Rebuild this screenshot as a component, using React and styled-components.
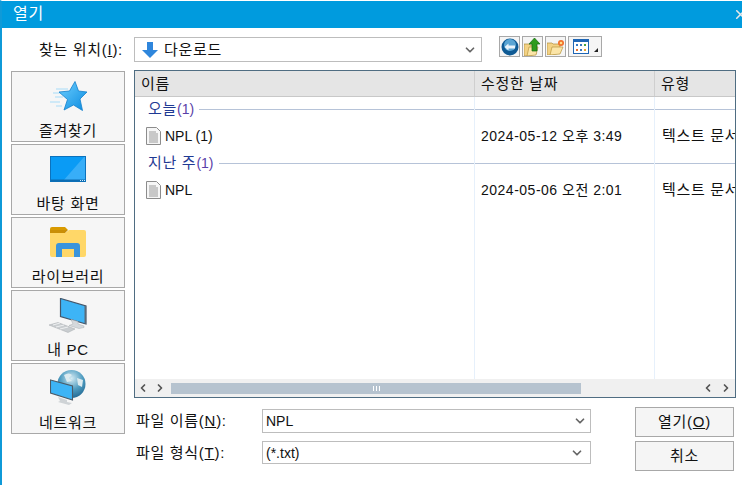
import React from "react";
import styled, { createGlobalStyle } from "styled-components";
import { ChevronDown, ChevronLeft, ChevronRight, X } from "lucide-react";

const GlobalStyle = createGlobalStyle`
  html, body { margin: 0; padding: 0; background: #fff; }
  * { box-sizing: border-box; }
  body {
    font-family: "Liberation Sans", "Noto Sans CJK KR", sans-serif;
    font-size: 15px;
    line-height: 20px;
    letter-spacing: 0.7px;
    color: #111;
  }
`;

const places = [
  { label: "즐겨찾기", icon: <StarIcon /> },
  { label: "바탕 화면", icon: <DesktopIcon /> },
  { label: "라이브러리", icon: <LibraryIcon /> },
  { label: "내 PC", icon: <PcIcon /> },
  { label: "네트워크", icon: <NetworkIcon /> },
];

const groups = [
  { title: "오늘", count: "(1)", name: "NPL (1)", date: "2024-05-12 오후 3:49" },
  { title: "지난 주", count: "(1)", name: "NPL", date: "2024-05-06 오전 2:01" },
];

function StarIcon() {
  return (
    <svg width="38" height="30" viewBox="0 0 38 30">
      <defs>
        <linearGradient id="star" x1="0" y1="0" x2="1" y2="1">
          <stop offset="0" stopColor="#6fd0ff" />
          <stop offset="1" stopColor="#0a8be0" />
        </linearGradient>
      </defs>
      <path d="M7 8h12M4 12h10M6 16h8M1 21h10M7 25h6" stroke="#a8dcf8" strokeWidth="1.2" />
      <path d="M26 .5l3.500 9.500L38 11l-7 7 2.500 11.500-9-5.500-9.500 5 3.500-10.500L10 11l10.500-1z" fill="url(#star)" stroke="#1480cc" strokeWidth="0.8" />
    </svg>
  );
}

function DesktopIcon() {
  return (
    <svg width="36" height="26" viewBox="0 0 36 26">
      <rect x="0.500" y="0.500" width="35" height="25" fill="#0a9bf5" stroke="#0c72bd" />
      <path d="M13 25L34 1h1v24z" fill="#38aef8" />
      <rect x="1" y="23.500" width="34" height="2" fill="#0c6cb2" />
      <path d="M30 24.500h5" stroke="#d8eefc" strokeDasharray="1 1" />
    </svg>
  );
}

function LibraryIcon() {
  return (
    <svg width="36" height="30" viewBox="0 0 36 30">
      <path d="M0 2q0-2 2-2h13l3 3h-18z" fill="#d99a00" />
      <path d="M0 6h15l4-3h15q2 0 2 2v23q0 2-2 2H2q-2 0-2-2z" fill="#ffd768" />
      <path d="M0 3h18l-3 3H0z" fill="#c98e06" />
      <path d="M6 30V19q0-3 3-3h18q3 0 3 3v11h-6v-8H12v8z" fill="#3a94dc" />
    </svg>
  );
}

function PcIcon() {
  return (
    <svg width="38" height="35" viewBox="0 0 38 35">
      <path d="M11.500 .5l25.500 7.500v18L11.500 18.500z" fill="#3db4f6" stroke="#44566a" strokeWidth="1.2" />
      <path d="M37 8v18l-1.500-.5V8z" fill="#5a6b78" />
      <path d="M22 21.500l7 2v2.500l6 2v1.500l-5 1-10-3 4-1.500z" fill="#d5d9dc" stroke="#aab0b5" strokeWidth="0.5" />
      <path d="M0 27l9-2.500 17 6.500-7 3.500z" fill="#c9cdd0" stroke="#a4a8ac" strokeWidth="0.5" />
      <path d="M4 27l7-2M7 29l8-2M11 31l8-2" stroke="#eef0f1" />
    </svg>
  );
}

function NetworkIcon() {
  return (
    <svg width="36" height="36" viewBox="0 0 36 36">
      <defs>
        <radialGradient id="globe" cx="0.500" cy="0.300" r="0.800">
          <stop offset="0" stopColor="#d3eaf3" />
          <stop offset="0.500" stopColor="#4f9cc0" />
          <stop offset="1" stopColor="#165a86" />
        </radialGradient>
      </defs>
      <circle cx="21.500" cy="14" r="14" fill="url(#globe)" />
      <path d="M14 5q5-3 8 0l-3 3 3 3-5 1zM27 8l6 2-1 7-4-2z" fill="#dcebf0" />
      <path d="M0.500 10l22 6v14l-22-7z" fill="#3db4f6" stroke="#4b5b68" strokeWidth="1.1" />
      <path d="M8 27l9 3v2l5 1-3 2-11-3 2-1z" fill="#cfd3d6" />
    </svg>
  );
}

function ArrowDownIcon() {
  return (
    <svg width="16" height="16" viewBox="0 0 16 16">
      <path d="M5 0h6v8h5l-8 8-8-8h5z" fill="#2f86dc" />
    </svg>
  );
}

function BackIcon() {
  return (
    <svg width="18" height="18" viewBox="0 0 18 18">
      <circle cx="9" cy="9" r="8.500" fill="#0f5a94" />
      <circle cx="9" cy="7" r="6" fill="#5aa5d4" />
      <path d="M3.500 9l4-3.500v2H14v3H7.500v2z" fill="#eaf4fb" />
    </svg>
  );
}

function UpIcon() {
  return (
    <svg width="17" height="18" viewBox="0 0 17 18">
      <path d="M0 6h5l1 1h6v9l-9 2H0z" fill="#f3d284" stroke="#b08d3c" strokeWidth="0.7" />
      <path d="M3 18l2-9h9l-2 8z" fill="#fbe5a8" stroke="#b8963f" strokeWidth="0.7" />
      <path d="M10.500 0L16 6h-3v7H8V6H5z" fill="#2e9b1d" stroke="#186b10" strokeWidth="0.7" />
    </svg>
  );
}

function NewFolderIcon() {
  return (
    <svg width="18" height="16" viewBox="0 0 18 16">
      <path d="M0 4h5l1 1h7v9l-9 2H0z" fill="#f3d284" stroke="#b08d3c" strokeWidth="0.7" />
      <path d="M3 16l2-8h11l-3 7z" fill="#fbe5a8" stroke="#b8963f" strokeWidth="0.7" />
      <circle cx="14" cy="4" r="3" fill="#f2702a" />
      <circle cx="14" cy="4" r="1.300" fill="#ffe08a" />
    </svg>
  );
}

function ViewIcon() {
  return (
    <svg width="16" height="15" viewBox="0 0 16 15">
      <rect x="0.500" y="0.500" width="15" height="14" fill="#fff" stroke="#1f66b5" />
      <rect x="1" y="1" width="14" height="2" fill="#1f66b5" />
      <path d="M3 5h2v2H3z" fill="#3778c0" />
      <path d="M7 5h2v2H7z" fill="#3778c0" />
      <path d="M11 5h2v2h-2z" fill="#49a63c" />
      <path d="M3 10h2v2H3z" fill="#e8702a" />
      <path d="M7 10h2v2H7z" fill="#3778c0" />
      <path d="M11 10h2v2h-2z" fill="#e8a52a" />
    </svg>
  );
}

function FileIcon() {
  return (
    <svg width="15" height="18" viewBox="0 0 15 18">
      <path d="M.5.500h10l4 4v13H.5z" fill="#f6f6f6" stroke="#8c8c8c" />
      <path d="M3 5h7M3 7h9M3 9h9M3 11h9M3 13h9M3 15h9" stroke="#9a9a9a" />
    </svg>
  );
}

export default function App() {
  return (
    <Window>
      <GlobalStyle />
      <TitleBar>
        <span>열기</span>
        <CloseMark><X size={15} strokeWidth={2.5} /></CloseMark>
      </TitleBar>
      <Content>
        <LookInRow>
          <LookInLabel>찾는 위치(<u>I</u>):</LookInLabel>
          <LookInCombo>
            <ArrowDownIcon />
            <span>다운로드</span>
            <Chevron><ChevronDown size={14} strokeWidth={3} /></Chevron>
          </LookInCombo>
          <Toolbar>
            <ToolButton><BackIcon /></ToolButton>
            <ToolButton><UpIcon /></ToolButton>
            <ToolButton><NewFolderIcon /></ToolButton>
            <ViewButton><ViewIcon /><ViewCaret /></ViewButton>
          </Toolbar>
        </LookInRow>
        <MainRow>
          <PlacesBar>
            {places.map((p) => (
              <PlaceButton key={p.label}>
                <PlaceIcon>{p.icon}</PlaceIcon>
                <PlaceLabel>{p.label}</PlaceLabel>
              </PlaceButton>
            ))}
          </PlacesBar>
          <RightColumn>
            <FileList>
              <ListHeader>
                <HeadCell $w={340}>이름</HeadCell>
                <HeadCell $w={180}>수정한 날짜</HeadCell>
                <HeadCell $w={80} $last>유형</HeadCell>
              </ListHeader>
              <ListBody>
                <ColumnLines>
                  <ColumnLine $w={340} />
                  <ColumnLine $w={180} />
                </ColumnLines>
                {groups.map((g) => (
                  <div key={g.title}>
                    <GroupRow>
                      <GroupTitle>{g.title}<GroupCount>{g.count}</GroupCount></GroupTitle>
                      <GroupLine />
                    </GroupRow>
                    <FileRow>
                      <NameCell><FileIcon /><span>{g.name}</span></NameCell>
                      <DateCell>{g.date}</DateCell>
                      <TypeCell>텍스트 문서</TypeCell>
                    </FileRow>
                  </div>
                ))}
              </ListBody>
              <ScrollBar>
                <ScrollArrows $left>
                  <ChevronLeft size={12} strokeWidth={3.5} />
                  <ChevronRight size={12} strokeWidth={3.5} />
                </ScrollArrows>
                <ScrollTrack>
                  <ScrollThumb><Grip /></ScrollThumb>
                </ScrollTrack>
                <ScrollArrows>
                  <ChevronLeft size={12} strokeWidth={3.5} />
                  <ChevronRight size={12} strokeWidth={3.5} />
                </ScrollArrows>
              </ScrollBar>
            </FileList>
            <FormArea>
              <FormFields>
                <FormLabel>파일 이름(<u>N</u>):</FormLabel>
                <FieldBox>NPL<Chevron><ChevronDown size={14} strokeWidth={3} /></Chevron></FieldBox>
                <FormLabel>파일 형식(<u>T</u>):</FormLabel>
                <FieldBox $short>(*.txt)<Chevron $inset><ChevronDown size={14} strokeWidth={3} /></Chevron></FieldBox>
              </FormFields>
              <Actions>
                <ActionButton>열기(<u>O</u>)</ActionButton>
                <ActionButton>취소</ActionButton>
              </Actions>
            </FormArea>
          </RightColumn>
        </MainRow>
      </Content>
    </Window>
  );
}

const Window = styled.div`
  width: 742px;
  height: 485px;
  overflow: hidden;
  background: #fff;
  border-left: 2px solid #0f9ad8;
  border-top: 1px solid #fff;
`;

const TitleBar = styled.div`
  height: 27px;
  margin-left: -2px;
  padding: 0 0 2px 13px;
  display: flex;
  align-items: center;
  justify-content: space-between;
  background: #009bde;
  color: #fff;
  font-size: 16px;
`;

const CloseMark = styled.span`
  display: flex;
  margin-right: -6px;
  margin-top: 2px;
  color: #e8e8e8;
`;

const Content = styled.div`
  padding: 9px 0 0 9px;
`;

const LookInRow = styled.div`
  display: flex;
  align-items: flex-start;
  height: 33px;
`;

const LookInLabel = styled.div`
  width: 112px;
  height: 25px;
  line-height: 25px;
  text-align: right;
  white-space: nowrap;
`;

const LookInCombo = styled.div`
  width: 348px;
  height: 25px;
  margin-left: 11px;
  padding: 0 4px 0 7px;
  display: flex;
  align-items: center;
  gap: 6px;
  border: 1px solid #bdbdbd;
`;

const Chevron = styled.span`
  margin-left: auto;
  margin-right: ${(p) => (p.$inset ? "3px" : "0")};
  display: flex;
  color: #666;
`;

const Toolbar = styled.div`
  margin-left: 17px;
  margin-top: -1px;
  display: flex;
  gap: 2px;
`;

const ToolButton = styled.div`
  width: 21px;
  height: 21px;
  display: flex;
  align-items: center;
  justify-content: center;
  background: #f5f5f5;
  border: 1px solid #a8a8a8;
`;

const ViewButton = styled(ToolButton)`
  width: 34px;
  position: relative;
  justify-content: flex-start;
  padding-left: 4px;
`;

const ViewCaret = styled.span`
  position: absolute;
  right: 3px;
  bottom: 4px;
  width: 0;
  height: 0;
  border-left: 4px solid transparent;
  border-bottom: 4px solid #222;
`;

const MainRow = styled.div`
  display: flex;
  gap: 9px;
`;

const PlacesBar = styled.div`
  width: 114px;
  margin-top: 1px;
  display: flex;
  flex-direction: column;
  gap: 2px;
`;

const PlaceButton = styled.div`
  height: 71px;
  display: flex;
  flex-direction: column;
  align-items: center;
  background: #f6f6f6;
  border: 1px solid #a8a8a8;
`;

const PlaceIcon = styled.div`
  height: 48px;
  display: flex;
  align-items: center;
  justify-content: center;
`;

const PlaceLabel = styled.div`
  margin-top: 1px;
`;

const RightColumn = styled.div`
  width: 602px;
`;

const FileList = styled.div`
  height: 328px;
  display: flex;
  flex-direction: column;
  border: 1px solid #4f6d82;
`;

const ListHeader = styled.div`
  height: 26px;
  flex: none;
  display: flex;
  background: #e5e5e5;
  border-bottom: 1px solid #c8c8c8;
`;

const HeadCell = styled.div`
  width: ${(p) => p.$w}px;
  flex: none;
  padding-left: 6px;
  line-height: 25px;
  border-right: ${(p) => (p.$last ? "none" : "1px solid #cfcfcf")};
`;

const ListBody = styled.div`
  flex: 1;
  position: relative;
  overflow: hidden;
`;

const ColumnLines = styled.div`
  position: absolute;
  inset: 0;
  display: flex;
  pointer-events: none;
`;

const ColumnLine = styled.div`
  width: ${(p) => p.$w}px;
  flex: none;
  border-right: 1px solid #e6f0fb;
`;

const GroupRow = styled.div`
  height: 24px;
  padding-left: 13px;
  display: flex;
  align-items: center;
  gap: 5px;
`;

const GroupTitle = styled.div`
  color: #1f3a93;
  white-space: nowrap;
`;

const GroupCount = styled.span`
  color: #5a3fa8;
  font-size: 14px;
  letter-spacing: 0;
`;

const GroupLine = styled.div`
  flex: 1;
  height: 1px;
  background: #b6c3d8;
`;

const FileRow = styled.div`
  height: 30px;
  display: flex;
  align-items: center;
`;

const NameCell = styled.div`
  width: 340px;
  flex: none;
  padding-left: 11px;
  display: flex;
  align-items: center;
  gap: 4px;
  font-size: 14px;
  letter-spacing: 0;
`;

const DateCell = styled.div`
  width: 180px;
  flex: none;
  padding-left: 6px;
  white-space: nowrap;
  font-size: 14px;
  letter-spacing: 0.5px;
`;

const TypeCell = styled.div`
  flex: none;
  padding-left: 7px;
  white-space: nowrap;
`;

const ScrollBar = styled.div`
  height: 18px;
  flex: none;
  display: flex;
  align-items: center;
  background: #f0f0f0;
`;

const ScrollArrows = styled.div`
  width: 36px;
  flex: none;
  display: flex;
  justify-content: space-between;
  padding: ${(p) => (p.$left ? "0 5px 0 2px" : "0 3px")};
  color: #555;
`;

const ScrollTrack = styled.div`
  flex: 1;
`;

const ScrollThumb = styled.div`
  width: 410px;
  height: 11px;
  display: flex;
  align-items: center;
  justify-content: center;
  background: #b6c3cf;
`;

const Grip = styled.span`
  width: 7px;
  height: 5px;
  background: repeating-linear-gradient(90deg, #fff 0 1px, transparent 1px 3px);
`;

const FormArea = styled.div`
  display: flex;
  padding-top: 9px;
`;

const FormFields = styled.div`
  width: 457px;
  padding-top: 2px;
  display: grid;
  grid-template-columns: 128px 329px;
  grid-auto-rows: 24px;
  row-gap: 8px;
`;

const FormLabel = styled.div`
  padding-left: 2px;
  line-height: 24px;
  white-space: nowrap;
`;

const FieldBox = styled.div`
  height: ${(p) => (p.$short ? "23px" : "24px")};
  padding: 0 3px 0 3px;
  display: flex;
  align-items: center;
  border: 1px solid #bdbdbd;
  font-size: 14px;
  letter-spacing: 0;
`;

const Actions = styled.div`
  margin-left: 44px;
  display: flex;
  flex-direction: column;
  gap: 4px;
`;

const ActionButton = styled.div`
  width: 99px;
  height: 30px;
  display: flex;
  align-items: center;
  justify-content: center;
  background: #f5f5f5;
  border: 1px solid #a8a8a8;
`;
